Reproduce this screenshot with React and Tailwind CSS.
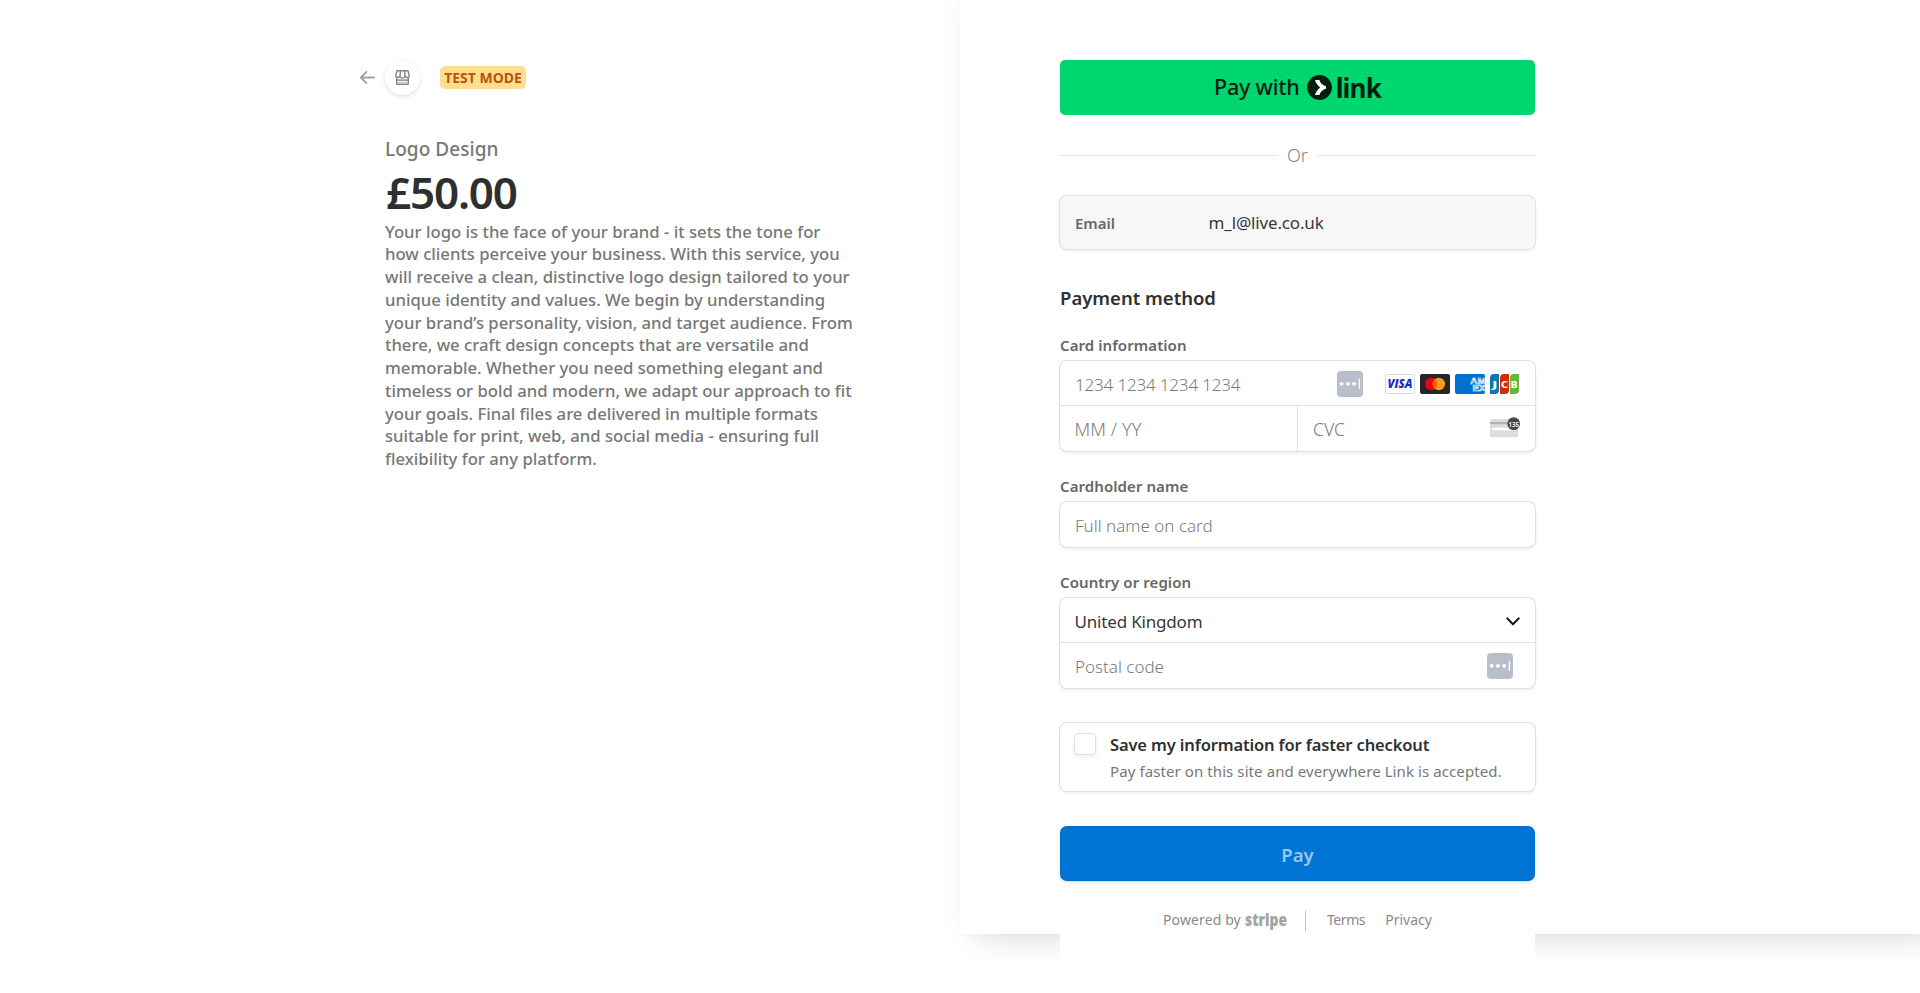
import React from "react";

const RING =
  "shadow-[0_0_0_1px_#e0e0e0,0_2px_4px_0_rgba(0,0,0,0.07),0_1px_1.5px_0_rgba(0,0,0,0.05)]";

function BackArrow() {
  return (
    <svg width="15" height="13" viewBox="0 0 15 13" fill="none" stroke="#a0a0a0" strokeWidth="1.8" strokeLinecap="round" strokeLinejoin="round">
      <path d="M14.2 6.5H1.2M6.4 0.9L0.9 6.5l5.5 5.6" />
    </svg>
  );
}

function StoreIcon() {
  return (
    <svg width="15" height="15" viewBox="0 0 15 15" fill="none" stroke="#868686" strokeWidth="1.4" strokeLinejoin="round">
      <path d="M2 0.800h11l1.200 4.400a1.900 1.900 0 0 1-1.900 2.300 2.500 2.500 0 0 1-2.300-1.300 2.600 2.600 0 0 1-5 0 2.500 2.500 0 0 1-2.300 1.300A1.900 1.900 0 0 1 0.800 5.200z" />
      <path d="M5.400 0.800L5 6.200M9.600 0.800L10 6.200" />
      <path d="M1.700 7.500v6.700h11.600V7.500" />
      <path d="M2 10.100h11" />
      <path d="M2.400 12.300h10.200" stroke="#c4c4c4" strokeWidth="1" />
    </svg>
  );
}

function LinkMark() {
  return (
    <svg width="25" height="25" viewBox="0 0 25 25">
      <circle cx="12.500" cy="12.500" r="12.400" fill="#011e0f" />
      <path d="M7.900 5h4.500c.8 3 3 5 6.600 6.300v2.400c-3.600 1.300-5.800 3.300-6.600 6.300H7.900c1-3.200 2.900-5.800 5.300-7.500C10.800 10.800 8.900 8.200 7.900 5z" fill="#fff" />
    </svg>
  );
}

function AutofillIcon() {
  return (
    <svg width="26" height="26" viewBox="0 0 26 26" className="shrink-0">
      <rect width="26" height="26" rx="4" fill="#b8bfca" />
      <circle cx="4.600" cy="12.800" r="1.900" fill="#fff" />
      <circle cx="10.900" cy="12.800" r="1.900" fill="#fff" />
      <circle cx="17.200" cy="12.800" r="1.900" fill="#fff" />
      <rect x="21.800" y="7.800" width="1.300" height="10.200" fill="#fff" />
    </svg>
  );
}

function Visa() {
  return (
    <svg width="30" height="20" viewBox="0 0 30 20">
      <rect x="0.500" y="0.500" width="29" height="19" rx="1.500" fill="#fff" stroke="#dcdcdc" />
      <text x="15" y="14" textAnchor="middle" textLength="25" lengthAdjust="spacingAndGlyphs" fontFamily="'Open Sans', sans-serif" fontSize="11.500" fontWeight="800" fontStyle="italic" fill="#1a2fc4">VISA</text>
    </svg>
  );
}

function Mastercard() {
  return (
    <svg width="30" height="20" viewBox="0 0 30 20">
      <rect width="30" height="20" rx="2" fill="#252525" />
      <circle cx="11.200" cy="10" r="6.200" fill="#eb001b" />
      <circle cx="18.800" cy="10" r="6.200" fill="#f79e1b" />
      <path d="M15 5.100a6.200 6.200 0 0 1 0 9.800 6.200 6.200 0 0 1 0-9.800z" fill="#ff5f00" />
    </svg>
  );
}

function Amex() {
  return (
    <svg width="30" height="20" viewBox="0 0 30 20">
      <defs>
        <clipPath id="amex"><rect width="30" height="20" rx="2" /></clipPath>
      </defs>
      <g clipPath="url(#amex)" fontFamily="'Liberation Sans', sans-serif" fontSize="9" fontWeight="700" fill="#0070d1" stroke="#fff" strokeWidth="0.650">
        <rect width="30" height="20" fill="#0070d1" stroke="none" />
        <text x="15.300" y="9.700" textLength="15.500" lengthAdjust="spacingAndGlyphs">AM</text>
        <text x="17.500" y="16.900" textLength="13" lengthAdjust="spacingAndGlyphs">EX</text>
      </g>
    </svg>
  );
}

function Jcb() {
  return (
    <svg width="30" height="20" viewBox="0 0 30 20">
      <path d="M0 4a4 4 0 0 1 4-4h5v16a4 4 0 0 1-4 4H0z" fill="#047ab1" />
      <path d="M10 4a4 4 0 0 1 4-4h5v16a4 4 0 0 1-4 4h-5z" fill="#d42d06" />
      <path d="M20 4a4 4 0 0 1 4-4h5v16a4 4 0 0 1-4 4h-5z" fill="#67b637" />
      <g fontFamily="'DejaVu Sans', sans-serif" fontSize="9.500" fontWeight="700" fill="#fff">
        <text transform="translate(2.300 13.500) scale(1.450 1)">J</text>
        <text x="10.900" y="13.500">C</text>
        <text x="20.600" y="13.500">B</text>
      </g>
    </svg>
  );
}

function CvcIcon() {
  return (
    <svg width="31" height="21" viewBox="0 0 31 21">
      <rect y="2" width="28" height="18.300" rx="2" fill="#dcdcdc" />
      <rect y="5" width="28" height="2.200" fill="#b3b3b3" />
      <rect x="2" y="10.700" width="20" height="2.600" fill="#fff" />
      <circle cx="23.700" cy="6.700" r="6.400" fill="#474747" />
      <text x="23.700" y="9.500" textAnchor="middle" textLength="10.500" lengthAdjust="spacingAndGlyphs" fontFamily="'Noto Sans', sans-serif" fontSize="7.800" fontWeight="600" fill="#fff">135</text>
    </svg>
  );
}

function Chevron() {
  return (
    <svg width="14" height="9" viewBox="0 0 14 9" fill="none" stroke="#111" strokeWidth="2" strokeLinecap="round" strokeLinejoin="round">
      <path d="M1.300 1.400L7 7.200l5.700-5.800" />
    </svg>
  );
}

function Label({ children }) {
  return (
    <div className="mt-6 mb-[5px] h-[22px] text-[15px] leading-[22px] font-semibold tracking-[0.08px] text-[#666]">
      {children}
    </div>
  );
}

export default function App() {
  return (
    <div className="flex h-[993px] w-full overflow-hidden bg-white font-['Noto_Sans',sans-serif] text-[#303030]">
      <section className="w-[960px] shrink-0 pt-[60px] pl-[360px]">
        <header className="flex h-[35px] items-center">
          <BackArrow />
          <div className="ml-[10px] flex size-[35px] items-center justify-center rounded-full bg-white shadow-[0_2px_5px_rgba(0,0,0,0.1),0_0_3px_rgba(0,0,0,0.04)]">
            <StoreIcon />
          </div>
          <div className="ml-[20px] h-[23px] w-[86px] rounded-[5px] bg-[#ffde92] text-center text-sm leading-[23px] font-bold whitespace-nowrap text-[#bb5504]">
            TEST MODE
          </div>
        </header>
        <div className="ml-[25px] w-[475px]">
          <div className="mt-[41px] h-[26px] text-[19px] leading-[26px] font-medium tracking-[0.05px] text-[#777]">
            Logo Design
          </div>
          <div className="mt-[2px] h-14 pl-px text-[44px] leading-14 font-semibold tracking-[-1.2px] text-[#2f2f2f]">
            £50.00
          </div>
          <p className="mt-[0.5px] text-[16.7px] leading-[22.75px] font-medium whitespace-nowrap text-[#777]">
            Your logo is the face of your brand - it sets the tone for<br />
            how clients perceive your business. With this service, you<br />
            will receive a clean, distinctive logo design tailored to your<br />
            unique identity and values. We begin by understanding<br />
            your brand’s personality, vision, and target audience. From<br />
            there, we craft design concepts that are versatile and<br />
            memorable. Whether you need something elegant and<br />
            timeless or bold and modern, we adapt our approach to fit<br />
            your goals. Final files are delivered in multiple formats<br />
            suitable for print, web, and social media - ensuring full<br />
            flexibility for any platform.
          </p>
        </div>
      </section>

      <section className="h-[934px] flex-1 bg-white pl-[100px] shadow-[15px_0_30px_0_rgba(0,0,0,0.18)]">
        <div className="h-[993px] w-[475px] bg-white pt-[60px]">
          <button className="flex h-[55px] w-full items-center justify-center rounded-[5px] bg-[#00d66f] text-[#011e0f]">
            <span className="text-[21.5px] font-medium tracking-[-0.2px]">Pay with</span>
            <span className="ml-[7px]"><LinkMark /></span>
            <span className="ml-[4px] pt-px text-[26px] font-bold tracking-[-0.8px]">link</span>
          </button>

          <div className="mt-[27px] flex h-[27px] items-center gap-[9px]">
            <div className="h-px flex-1 bg-[#e5e5e5]" />
            <span className="text-[18px] font-light text-[#858585]">Or</span>
            <div className="h-px flex-1 bg-[#e5e5e5]" />
          </div>

          <div className={`mt-[27px] h-[53px] rounded-[7px] bg-[#f7f7f7] ${RING}`}>
            <div className="flex items-baseline pt-[13.5px] pl-[15px] leading-[26px]">
              <span className="w-[133.5px] text-[15px] font-semibold text-[#666]">Email</span>
              <span className="text-[17px] tracking-[-0.15px] text-[#383838]">m_l@live.co.uk</span>
            </div>
          </div>

          <h2 className="mt-[37px] h-6 text-[18.5px] leading-6 font-semibold">Payment method</h2>

          <Label>Card information</Label>
          <div className={`h-[90px] rounded-[7px] bg-white text-[17px] font-light text-[#7a7a7a] ${RING}`}>
            <div className="flex h-11 items-center pt-[2px] pr-[15px] pl-[15px]">
              <span className="flex-1 pt-[2px] tracking-[-0.17px]">1234 1234 1234 1234</span>
              <AutofillIcon />
              <div className="ml-[22px] flex gap-[5px]">
                <Visa />
                <Mastercard />
                <Amex />
                <Jcb />
              </div>
            </div>
            <div className="-mr-px flex h-[46px] rounded-br-[7px] border-t border-r border-[#e0e0e0]">
              <div className="flex w-[238px] items-center border-r border-[#e0e0e0] pt-[2px] pl-[14.5px] text-[18px] tracking-[0.1px]">
                MM / YY
              </div>
              <div className="flex flex-1 items-center justify-between pr-[14px] pl-[15px]">
                <span className="pt-[2px] text-[17.5px]">CVC</span>
                <span className="-mt-[3px]"><CvcIcon /></span>
              </div>
            </div>
          </div>

          <Label>Cardholder name</Label>
          <div className={`flex h-[45px] items-center rounded-[7px] bg-white pt-[2px] pl-[15px] text-[17px] font-light text-[#7a7a7a] ${RING}`}>
            Full name on card
          </div>

          <Label>Country or region</Label>
          <div className={`h-[90px] rounded-[7px] bg-white text-[17px] ${RING}`}>
            <div className="flex h-11 items-center justify-between pt-[2px] pr-[15px] pl-[14.5px]">
              <span className="pt-[2px] tracking-[-0.18px] text-[#383838]">United Kingdom</span>
              <Chevron />
            </div>
            <div className="flex h-[46px] items-center justify-between border-t border-[#e0e0e0] pt-px pr-[22px] pl-[15px] font-light text-[#7a7a7a]">
              <span className="pt-[2px]">Postal code</span>
              <AutofillIcon />
            </div>
          </div>

          <div className={`mt-[35px] flex h-[68px] rounded-[7px] bg-white pt-[10px] pl-[14px] ${RING}`}>
            <div className="size-[22px] rounded-[4px] border border-[#e0e0e0] bg-white shadow-[0_2px_4px_rgba(0,0,0,0.07)]" />
            <div className="ml-[14px] whitespace-nowrap">
              <div className="text-[16.5px] leading-6 font-semibold tracking-[-0.14px]">Save my information for faster checkout</div>
              <div className="mt-[2px] text-[15px] leading-6 tracking-[0.09px] text-[#777]">Pay faster on this site and everywhere Link is accepted.</div>
            </div>
          </div>

          <button className="mt-[35px] flex h-[55px] w-full items-center justify-center rounded-[7px] bg-[#0074d4] pt-[2px] text-[18.5px] font-semibold text-[#99c7ee] shadow-[inset_0_0_0_1px_rgba(50,50,93,0.1),0_2px_5px_0_rgba(50,50,93,0.1),0_1px_1.5px_0_rgba(0,0,0,0.07)]">
            Pay
          </button>

          <footer className="mt-[29px] flex h-[21px] items-center pl-[103px] text-[14px] leading-[21px] whitespace-nowrap text-[#8a8a8a]">
            <span className="pb-[2px] tracking-[0.12px]">Powered by</span>
            <span className="ml-[4px] w-[42px] pb-[2px]">
              <span className="inline-block origin-left scale-x-[0.77] text-[18px] font-black text-[#a3a3a3]">stripe</span>
            </span>
            <div className="ml-[18px] h-[21px] w-px bg-[#c4c4c4]" />
            <span className="ml-[21px] pb-[2px] tracking-[-0.4px]">Terms</span>
            <span className="ml-[20px] pb-[2px]">Privacy</span>
          </footer>
        </div>
      </section>
    </div>
  );
}
